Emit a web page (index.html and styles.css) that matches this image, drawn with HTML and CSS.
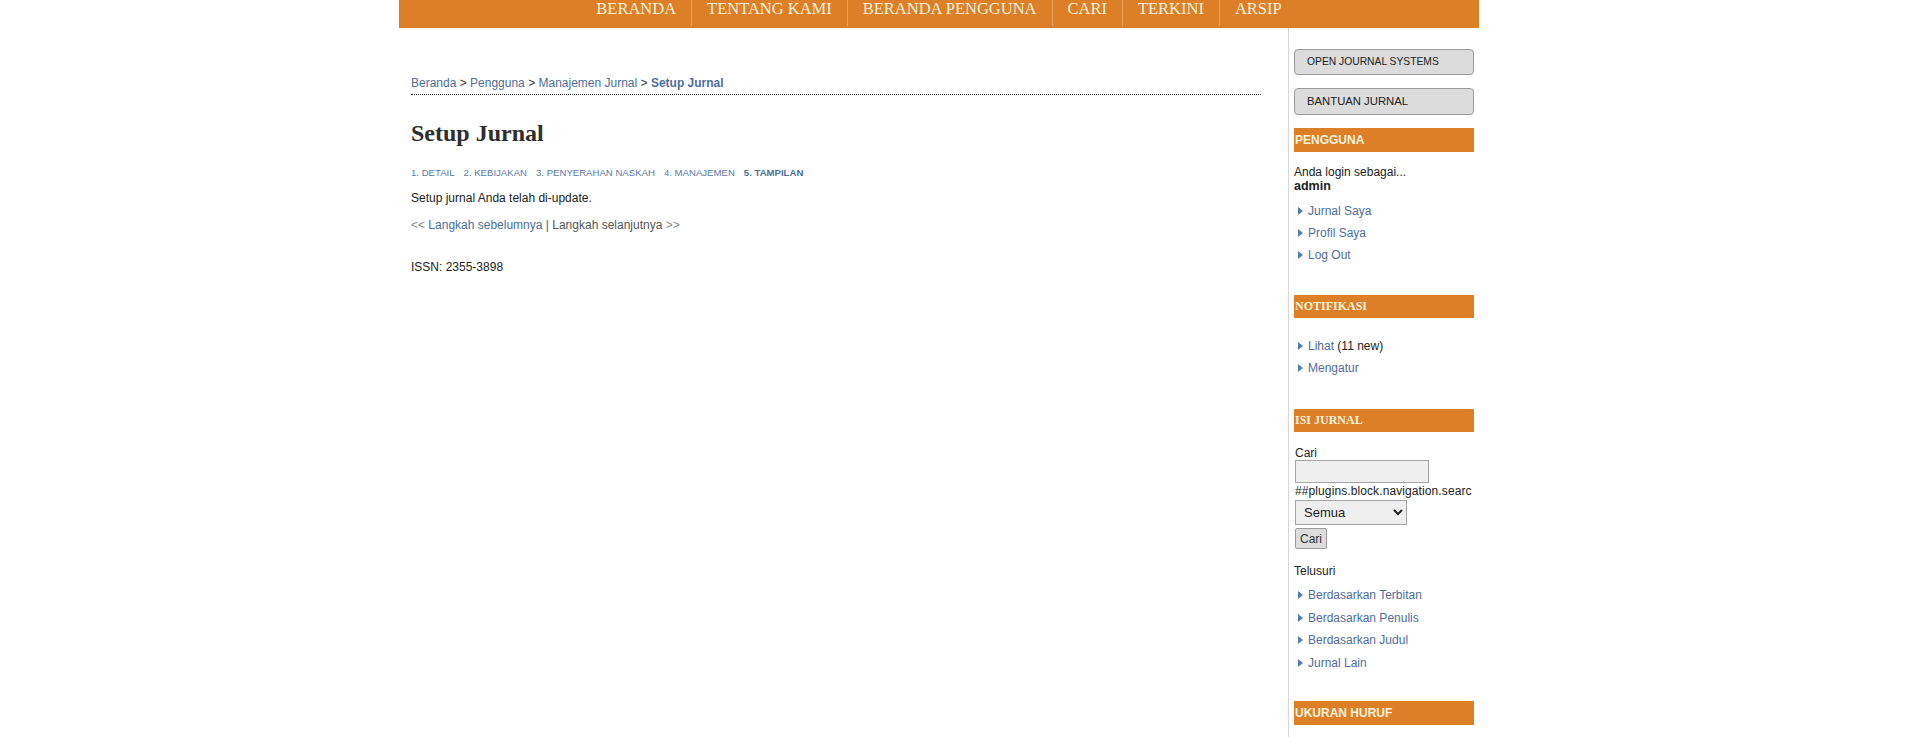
FILE: index.html
```html
<!DOCTYPE html>
<html lang="id">
<head>
<meta charset="utf-8">
<title>Setup Jurnal</title>
<link rel="stylesheet" href="styles.css">
</head>
<body>
<div class="page">
  <header class="navbar">
    <nav class="nav">
      <a class="nav-item" href="#">BERANDA</a>
      <a class="nav-item" href="#">TENTANG KAMI</a>
      <a class="nav-item" href="#">BERANDA PENGGUNA</a>
      <a class="nav-item" href="#">CARI</a>
      <a class="nav-item" href="#">TERKINI</a>
      <a class="nav-item" href="#">ARSIP</a>
    </nav>
  </header>
  <div class="layout">
    <main class="main">
      <div class="breadcrumb">
        <a href="#">Beranda</a> &gt; <a href="#">Pengguna</a> &gt; <a href="#">Manajemen Jurnal</a> &gt; <a class="current" href="#">Setup Jurnal</a>
      </div>
      <h1 class="title">Setup Jurnal</h1>
      <div class="steps">
        <a href="#">1. DETAIL</a>
        <a href="#">2. KEBIJAKAN</a>
        <a href="#">3. PENYERAHAN NASKAH</a>
        <a href="#">4. MANAJEMEN</a>
        <a class="current" href="#">5. TAMPILAN</a>
      </div>
      <p class="message">Setup jurnal Anda telah di-update.</p>
      <p class="pager"><span class="muted">&lt;&lt;</span> <a href="#">Langkah sebelumnya</a> <span class="sep">|</span> <span class="disabled">Langkah selanjutnya</span> <span class="muted">&gt;&gt;</span></p>
      <p class="issn">ISSN: 2355-3898</p>
    </main>
    <aside class="sidebar">
      <a class="side-btn side-btn-small" href="#">OPEN JOURNAL SYSTEMS</a>
      <a class="side-btn side-btn-large" href="#">BANTUAN JURNAL</a>

      <div class="block block-user">
        <div class="block-title">PENGGUNA</div>
        <div class="login-info">Anda login sebagai...<br><strong>admin</strong></div>
        <ul class="links links-user">
          <li><a href="#">Jurnal Saya</a></li>
          <li><a href="#">Profil Saya</a></li>
          <li><a href="#">Log Out</a></li>
        </ul>
      </div>

      <div class="block block-notif">
        <div class="block-title serif">NOTIFIKASI</div>
        <ul class="links links-notif">
          <li><a href="#">Lihat</a> (11 new)</li>
          <li><a href="#">Mengatur</a></li>
        </ul>
      </div>

      <div class="block block-content">
        <div class="block-title serif">ISI JURNAL</div>
        <form class="search">
          <label class="search-label" for="q">Cari</label>
          <input class="search-input" id="q" type="text">
          <div class="search-scope">##plugins.block.navigation.searchScope##</div>
          <select class="search-select">
            <option>Semua</option>
            <option>Penulis</option>
            <option>Judul</option>
          </select>
          <button class="search-btn" type="button">Cari</button>
        </form>
        <div class="browse-label">Telusuri</div>
        <ul class="links links-browse">
          <li><a href="#">Berdasarkan Terbitan</a></li>
          <li><a href="#">Berdasarkan Penulis</a></li>
          <li><a href="#">Berdasarkan Judul</a></li>
          <li><a href="#">Jurnal Lain</a></li>
        </ul>
      </div>

      <div class="block block-font">
        <div class="block-title">UKURAN HURUF</div>
        <div class="font-sizes">
          <span class="fs fs-s">A</span>
          <span class="fs fs-m">A</span>
          <span class="fs fs-l">A</span>
        </div>
      </div>
    </aside>
  </div>
</div>
</body>
</html>
```

FILE: styles.css
```css
html, body {
  margin: 0;
  padding: 0;
  background: #ffffff;
}

body {
  font-family: "Liberation Sans", Arial, sans-serif;
  font-size: 12px;
  color: #222222;
}

a {
  color: #4e6e9c;
  text-decoration: none;
}

.page {
  width: 1080px;
  margin-left: 399px;
}

/* ---------- top navigation ---------- */
.navbar {
  background: #dc7f26;
  height: 28px;
}

.nav {
  display: flex;
  justify-content: center;
  height: 28px;
}

.nav-item {
  font-family: "Liberation Serif", "Times New Roman", serif;
  font-size: 16.5px;
  line-height: 18px;
  color: #fdf3de;
  padding: 0 15px;
  height: 26px;
}

.nav-item + .nav-item {
  border-left: 1px solid #e8a35f;
}

/* ---------- layout ---------- */
.layout {
  display: flex;
  align-items: stretch;
}

.main {
  width: 850px;
  padding: 48px 27px 0 12px;
}

.sidebar {
  width: 180px;
  border-left: 1px solid #d6d6d6;
  padding: 21px 5px 40px 5px;
  overflow: hidden;
}

/* ---------- main content ---------- */
.breadcrumb {
  line-height: 15px;
  padding-bottom: 3px;
  border-bottom: 1px dotted #333333;
  color: #333333;
}

.breadcrumb .current {
  font-weight: bold;
}

.title {
  font-family: "Liberation Serif", "Times New Roman", serif;
  font-size: 24px;
  line-height: 28px;
  font-weight: bold;
  color: #2e2e2e;
  margin: 24px 0 0 0;
}

.steps {
  display: flex;
  gap: 9px;
  margin-top: 19px;
  font-size: 9.6px;
  line-height: 13px;
}

.steps a {
  color: #5a7aa6;
}

.steps .current {
  font-weight: bold;
  color: #4e6e9c;
}

.message {
  margin: 12px 0 0 0;
  line-height: 15px;
  color: #222222;
}

.pager {
  margin: 12px 0 0 0;
  line-height: 15px;
}

.pager .muted {
  color: #888888;
}

.pager .sep,
.pager .disabled {
  color: #555555;
}

.issn {
  margin: 27px 0 0 0;
  line-height: 15px;
  color: #222222;
}

/* ---------- sidebar ---------- */
.side-btn {
  display: block;
  box-sizing: border-box;
  width: 180px;
  background: #dcdcdc;
  border: 1px solid #9a9a9a;
  border-radius: 4px;
  color: #222222;
  padding-left: 12px;
}

.side-btn-small {
  height: 26px;
  line-height: 24px;
  font-size: 10.3px;
}

.side-btn-large {
  height: 27px;
  line-height: 25px;
  font-size: 11.3px;
  margin-top: 13px;
}

.block {
  margin-top: 29px;
  width: 180px;
}

.block-user {
  margin-top: 13px;
}

.block-content {
  margin-top: 30px;
}

.block-font {
  margin-top: 27px;
}

.block-title {
  background: #dc7f26;
  color: #fdf3de;
  font-weight: bold;
  font-size: 12px;
  height: 24px;
  line-height: 24px;
  padding-left: 1px;
}

.block-title.serif {
  font-family: "Liberation Serif", "Times New Roman", serif;
  height: 23px;
  line-height: 23px;
}

.login-info {
  margin-top: 13px;
  line-height: 14px;
  color: #222222;
}

.login-info strong {
  font-size: 12.5px;
}

.links {
  list-style: none;
  margin: 0;
  padding: 0;
}

.links li {
  position: relative;
  line-height: 22px;
  padding-left: 14px;
  color: #222222;
  white-space: nowrap;
}

.links li::before {
  content: "";
  position: absolute;
  left: 4px;
  top: 7px;
  border-left: 5px solid #4f7cb5;
  border-top: 4px solid transparent;
  border-bottom: 4px solid transparent;
}

.links-user {
  margin-top: 7px;
}

.links-notif {
  margin-top: 17px;
}

.links-browse {
  margin-top: 6px;
}

.links-browse li {
  line-height: 22.5px;
}

.search {
  display: flex;
  flex-direction: column;
  align-items: flex-start;
  margin-top: 14px;
}

.search-label {
  line-height: 14px;
  padding-left: 1px;
}

.search-input {
  box-sizing: border-box;
  width: 134px;
  height: 23px;
  margin: 0 0 0 1px;
  border: 1px solid #a5a5a5;
  background: #f0f0f0;
  padding: 0 3px;
}

.search-scope {
  width: 177px;
  overflow: hidden;
  line-height: 17px;
  white-space: nowrap;
  letter-spacing: 0.1px;
  padding-left: 1px;
}

.search-select {
  box-sizing: border-box;
  width: 112px;
  height: 25px;
  margin: 0 0 0 1px;
  border: 1px solid #a5a5a5;
  background: #efefef;
  font-family: "Liberation Sans", Arial, sans-serif;
  font-size: 13px;
  color: #222222;
  padding: 0 4px;
}

.search-btn {
  box-sizing: border-box;
  height: 21px;
  margin: 3px 0 0 1px;
  padding: 0 4px;
  border: 1px solid #9a9a9a;
  border-radius: 2px;
  background: #dddddd;
  font-family: "Liberation Sans", Arial, sans-serif;
  font-size: 12px;
  color: #333333;
}

.browse-label {
  margin-top: 15px;
  line-height: 14px;
}

.font-sizes {
  display: flex;
  align-items: flex-end;
  gap: 6px;
  margin-top: 40px;
  padding-left: 4px;
  color: #4e6e9c;
  font-weight: bold;
}

.fs-s { font-size: 11px; }
.fs-m { font-size: 14px; }
.fs-l { font-size: 17px; }
```
